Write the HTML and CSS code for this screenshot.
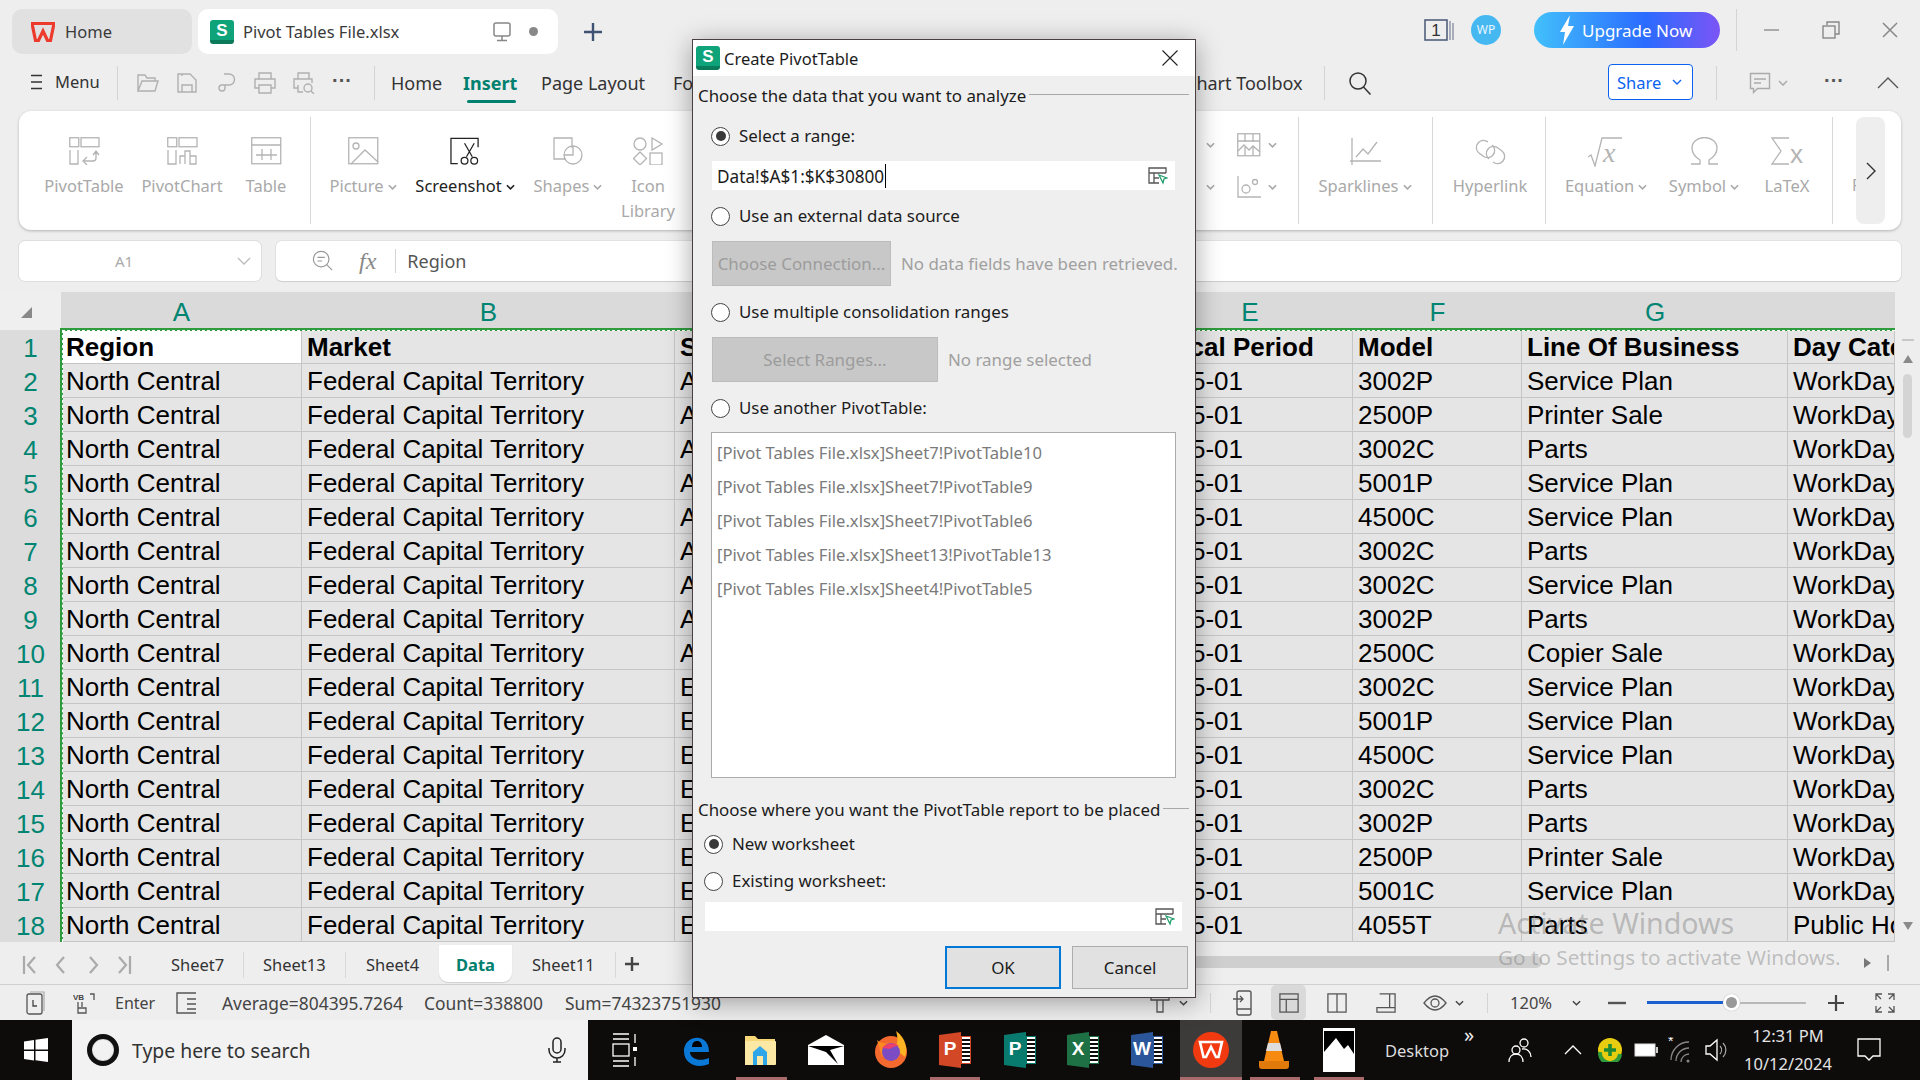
FILE: index.html
```html
<!DOCTYPE html>
<html lang="en">
<head>
<meta charset="utf-8">
<title>Pivot Tables File.xlsx</title>
<link rel="stylesheet" href="styles.css">
</head>
<body>
<div class="app">

<header class="titlebar">
  <div class="tab tab-home">
    <svg class="wps-logo" viewBox="0 0 24 20"><path d="M1 1.500h22l-3.500 17h-3L12 9l-4.500 9.500h-3z" fill="none" stroke="#ee3a2c" stroke-width="3.200" stroke-linejoin="miter"/></svg>
    <span>Home</span>
  </div>
  <div class="tab tab-doc">
    <span class="s-icon">S</span>
    <span class="doc-name">Pivot Tables File.xlsx</span>
    <svg class="monitor" viewBox="0 0 18 20"><rect x="1" y="1" width="16" height="13" rx="2" fill="none" stroke="#888" stroke-width="1.500"/><path d="M9 14v4M4 18.500h10" stroke="#888" stroke-width="1.500"/></svg>
    <span class="doc-dot"></span>
  </div>
  <svg class="plus" viewBox="0 0 20 20"><path d="M10 1v18M1 10h18" stroke="#3f5273" stroke-width="2.400"/></svg>
  <div class="title-right">
    <svg class="ic-pages" viewBox="0 0 31 24"><rect x="1" y="2" width="22" height="20" fill="none" stroke="#51607c" stroke-width="1.600"/><path d="M26 3v19M29 5v17" stroke="#8a93a5" stroke-width="1.400"/><text x="12" y="18" class="ic-pages-n">1</text></svg>
    <span class="wp-badge">WP</span>
    <button class="upgrade"><svg class="bolt" viewBox="0 0 16 30"><path d="M11 0 1 17h5l-2 13 11-19H9z" fill="#fff"/></svg><span>Upgrade Now</span></button>
    <span class="vsep tall"></span>
    <svg class="win-btn" viewBox="0 0 18 18"><path d="M1 9h15" stroke="#999" stroke-width="1.600"/></svg>
    <svg class="win-btn" viewBox="0 0 18 18"><path d="M5 4V1h12v12h-4" fill="none" stroke="#888" stroke-width="1.400"/><rect x="1" y="5" width="12" height="12" fill="none" stroke="#888" stroke-width="1.400"/></svg>
    <svg class="win-btn" viewBox="0 0 18 18"><path d="M2 2l14 14M16 2 2 16" stroke="#888" stroke-width="1.500"/></svg>
  </div>
</header>

<nav class="menubar">
  <svg class="burger" viewBox="0 0 13 16"><path d="M1 1.500h11M1 8h11M1 14.500h11" stroke="#333" stroke-width="1.400"/></svg>
  <span class="menu-label">Menu</span>
  <span class="vsep"></span>
  <div class="quick">
    <svg viewBox="0 0 22 22"><path d="M1 19V3h7l2 3h8v3M1 19l4-10h16l-3 10z" fill="none"/></svg>
    <svg viewBox="0 0 22 22"><path d="M2 2h12l6 6v12H2zM6 20v-7h10v7M6 2v2" fill="none"/></svg>
    <svg viewBox="0 0 22 22"><path d="M9 2h5a5 5 0 0 1 0 11H10v3a3 3 0 0 1-6 0 3 3 0 0 1 3-3h3" fill="none"/></svg>
    <svg viewBox="0 0 22 22"><path d="M5 7V1h12v6M5 16H1V7h20v9h-4M5 13h12v8H5z" fill="none"/></svg>
    <svg viewBox="0 0 22 22"><path d="M5 7V1h11v6M5 16H1V7h18v4M5 13v7h5" fill="none"/><circle cx="15" cy="16" r="4" fill="none"/><path d="m18 19 3 3" fill="none"/></svg>
    <span class="dots">···</span>
  </div>
  <span class="vsep"></span>
  <div class="menu-tabs">
    <span class="m-home">Home</span>
    <span class="m-insert">Insert</span>
    <span class="m-layout">Page Layout</span>
    <span class="m-formulas">Formulas</span>
    <span class="m-chart">Chart Toolbox</span>
  </div>
  <span class="vsep sep-search"></span>
  <svg class="search" viewBox="0 0 24 24"><circle cx="10" cy="10" r="8" fill="none" stroke="#333" stroke-width="1.500"/><path d="m15.500 16 7 7.500" stroke="#333" stroke-width="1.500"/></svg>
  <button class="share"><span>Share</span><svg class="caret-s" viewBox="0 0 10 6"><path d="m1 1 4 4 4-4" fill="none" stroke="#0a62f0" stroke-width="1.300"/></svg></button>
  <span class="vsep sep-share"></span>
  <svg class="comment" viewBox="0 0 22 22"><path d="M1.500 1.500h19v15h-12l-4 4v-4h-3z" fill="none" stroke="#aaa" stroke-width="1.400"/><path d="M5 7h12M5 11h7" stroke="#aaa" stroke-width="1.300"/></svg>
  <svg class="caret-g" viewBox="0 0 10 6"><path d="m1 1 4 4 4-4" fill="none" stroke="#aaa" stroke-width="1.500"/></svg>
  <span class="dots dots-r">···</span>
  <svg class="collapse" viewBox="0 0 22 12"><path d="m1 11 10-10 10 10" fill="none" stroke="#555" stroke-width="1.400"/></svg>
</nav>

<section class="ribbon">
  <div class="rb i-pt"><svg viewBox="0 0 31 28"><rect x=".75" y=".75" width="9" height="9"/><rect x="12" y=".75" width="18" height="9"/><path d="M1 13v14h8V13M27 15v6a3 3 0 0 1-3 3h-9m3-4-4 4 4 4M24 18l3-4 3 4"/></svg><span>PivotTable</span></div>
  <div class="rb i-pc"><svg viewBox="0 0 31 28"><rect x=".75" y=".75" width="9" height="9"/><rect x="12" y=".75" width="18" height="9"/><path d="M1 13v14h8V13M13 27V19h5v8M18 27V14h5v13M23 27V19h6v8z"/></svg><span>PivotChart</span></div>
  <div class="rb i-tb"><svg viewBox="0 0 31 28"><rect x=".75" y=".75" width="29" height="26"/><path d="M1 8h29M5 18h21M11 12v11M20 12v11"/></svg><span>Table</span></div>
  <span class="rsep s1"></span>
  <div class="rb i-pic"><svg viewBox="0 0 31 28"><rect x=".75" y=".75" width="29" height="26"/><circle cx="8" cy="9" r="3"/><path d="m3 27 14-14 13 12"/></svg><span>Picture<svg class="cv" viewBox="0 0 10 6"><path d="M1 1l4 4 4-4"/></svg></span></div>
  <div class="rb i-shot dark"><svg viewBox="0 0 32 28"><path d="M8 27H1V1h28v9"/><path d="M15 6l8 14M25 6l-8 14"/><circle cx="15" cy="24" r="3.500"/><circle cx="25" cy="24" r="3.500"/></svg><span>Screenshot<svg class="cv" viewBox="0 0 10 6"><path d="M1 1l4 4 4-4"/></svg></span></div>
  <div class="rb i-sh"><svg viewBox="0 0 31 28"><path d="M13 22H1V1h18v10"/><circle cx="20" cy="18" r="9"/><path d="M20 9v9h-9"/></svg><span>Shapes<svg class="cv" viewBox="0 0 10 6"><path d="M1 1l4 4 4-4"/></svg></span></div>
  <div class="rb i-il"><svg viewBox="0 0 31 28"><circle cx="7" cy="7" r="6"/><path d="M19 1v12l10-6zM7 15l6.500 6.500L7 28 .5 21.500z"/><rect x="17" y="16" width="12" height="12"/></svg><span>Icon<br>Library</span></div>
  <div class="rb-small">
    <svg class="cv" viewBox="0 0 10 6"><path d="M1 1l4 4 4-4"/></svg>
    <svg class="sm" viewBox="0 0 24 24"><rect x=".75" y=".75" width="22" height="22"/><path d="M1 8h22M8 1v8M16 1v8M1 18l6-6 5 5 4-4 7 6M8 14v9M16 14v9"/></svg>
    <svg class="cv" viewBox="0 0 10 6"><path d="M1 1l4 4 4-4"/></svg>
    <svg class="cv" viewBox="0 0 10 6"><path d="M1 1l4 4 4-4"/></svg>
    <svg class="sm" viewBox="0 0 24 24"><path d="M1 1v21h23"/><circle cx="9" cy="14" r="4"/><circle cx="18" cy="7" r="2.500"/></svg>
    <svg class="cv" viewBox="0 0 10 6"><path d="M1 1l4 4 4-4"/></svg>
  </div>
  <span class="rsep"></span>
  <div class="rb i-sp"><svg viewBox="0 0 31 28"><path d="M2 1v27M0 24h31M6 20l7-8 5 5 9-12"/></svg><span>Sparklines<svg class="cv" viewBox="0 0 10 6"><path d="M1 1l4 4 4-4"/></svg></span></div>
  <span class="rsep s3"></span>
  <div class="rb i-hl"><svg viewBox="0 0 31 30"><path d="M13 5a7 7 0 0 0-10 1 7 7 0 0 0 1 10l4 3a7 7 0 0 0 10-1 7 7 0 0 0-1-10"/><path d="M18 25a7 7 0 0 0 10-1 7 7 0 0 0-1-10l-4-3a7 7 0 0 0-10 1 7 7 0 0 0 1 10"/></svg><span>Hyperlink</span></div>
  <span class="rsep s4"></span>
  <div class="rb i-eq"><svg viewBox="0 0 36 30"><path d="M0 20l3-2 4 11L14 1h20"/><text x="15" y="25" class="eq-x">x</text></svg><span>Equation<svg class="cv" viewBox="0 0 10 6"><path d="M1 1l4 4 4-4"/></svg></span></div>
  <div class="rb i-sy"><svg viewBox="0 0 31 28"><path d="M2 27h9v-4C6 20 3 16 3 11a12.500 10.500 0 0 1 25 0c0 5-3 9-8 12v4h9"/></svg><span>Symbol<svg class="cv" viewBox="0 0 10 6"><path d="M1 1l4 4 4-4"/></svg></span></div>
  <div class="rb i-lx"><svg viewBox="0 0 34 28"><path d="M19 1H2l9 13L2 27h17"/><text x="20" y="26" class="lx-x">x</text></svg><span>LaTeX</span></div>
  <span class="rsep s5"></span>
  <span class="rb-clip">F</span>
  <div class="rb-more"><svg viewBox="0 0 10 18"><path d="m1 1 8 8-8 8" fill="none" stroke="#333" stroke-width="1.400"/></svg></div>
</section>

<section class="formula">
  <div class="namebox"><span>A1</span><svg viewBox="0 0 14 8"><path d="m1 1 6 6 6-6" fill="none" stroke="#bbb" stroke-width="1.300"/></svg></div>
  <div class="fbar">
    <svg class="f-lens" viewBox="0 0 24 24"><circle cx="10" cy="10" r="8.500" fill="none" stroke="#999" stroke-width="1.300"/><path d="M6 8h8M6 12h5M16 16l6 6" stroke="#999" stroke-width="1.300"/></svg>
    <span class="fx">fx</span>
    <span class="vsep f-sep"></span>
    <span class="f-text">Region</span>
  </div>
</section>

<section class="sheet">
  <div class="grid">
    <div class="corner"><svg viewBox="0 0 12 12"><path d="M12 1v11H1z" fill="#888"/></svg></div>
    <div class="ch">A</div><div class="ch">B</div><div class="ch"></div><div class="ch">E</div><div class="ch">F</div><div class="ch">G</div><div class="ch"></div>

    <div class="rh">1</div><div class="c b sel">Region</div><div class="c b">Market</div><div class="c b">S</div><div class="c b">Fiscal Period</div><div class="c b">Model</div><div class="c b">Line Of Business</div><div class="c b">Day Category</div>
    <div class="rh">2</div><div class="c">North Central</div><div class="c">Federal Capital Territory</div><div class="c">A</div><div class="c date">5-01</div><div class="c">3002P</div><div class="c">Service Plan</div><div class="c">WorkDay</div>
    <div class="rh">3</div><div class="c">North Central</div><div class="c">Federal Capital Territory</div><div class="c">A</div><div class="c date">5-01</div><div class="c">2500P</div><div class="c">Printer Sale</div><div class="c">WorkDay</div>
    <div class="rh">4</div><div class="c">North Central</div><div class="c">Federal Capital Territory</div><div class="c">A</div><div class="c date">5-01</div><div class="c">3002C</div><div class="c">Parts</div><div class="c">WorkDay</div>
    <div class="rh">5</div><div class="c">North Central</div><div class="c">Federal Capital Territory</div><div class="c">A</div><div class="c date">5-01</div><div class="c">5001P</div><div class="c">Service Plan</div><div class="c">WorkDay</div>
    <div class="rh">6</div><div class="c">North Central</div><div class="c">Federal Capital Territory</div><div class="c">A</div><div class="c date">5-01</div><div class="c">4500C</div><div class="c">Service Plan</div><div class="c">WorkDay</div>
    <div class="rh">7</div><div class="c">North Central</div><div class="c">Federal Capital Territory</div><div class="c">A</div><div class="c date">5-01</div><div class="c">3002C</div><div class="c">Parts</div><div class="c">WorkDay</div>
    <div class="rh">8</div><div class="c">North Central</div><div class="c">Federal Capital Territory</div><div class="c">A</div><div class="c date">5-01</div><div class="c">3002C</div><div class="c">Service Plan</div><div class="c">WorkDay</div>
    <div class="rh">9</div><div class="c">North Central</div><div class="c">Federal Capital Territory</div><div class="c">A</div><div class="c date">5-01</div><div class="c">3002P</div><div class="c">Parts</div><div class="c">WorkDay</div>
    <div class="rh">10</div><div class="c">North Central</div><div class="c">Federal Capital Territory</div><div class="c">A</div><div class="c date">5-01</div><div class="c">2500C</div><div class="c">Copier Sale</div><div class="c">WorkDay</div>
    <div class="rh">11</div><div class="c">North Central</div><div class="c">Federal Capital Territory</div><div class="c">E</div><div class="c date">5-01</div><div class="c">3002C</div><div class="c">Service Plan</div><div class="c">WorkDay</div>
    <div class="rh">12</div><div class="c">North Central</div><div class="c">Federal Capital Territory</div><div class="c">E</div><div class="c date">5-01</div><div class="c">5001P</div><div class="c">Service Plan</div><div class="c">WorkDay</div>
    <div class="rh">13</div><div class="c">North Central</div><div class="c">Federal Capital Territory</div><div class="c">E</div><div class="c date">5-01</div><div class="c">4500C</div><div class="c">Service Plan</div><div class="c">WorkDay</div>
    <div class="rh">14</div><div class="c">North Central</div><div class="c">Federal Capital Territory</div><div class="c">E</div><div class="c date">5-01</div><div class="c">3002C</div><div class="c">Parts</div><div class="c">WorkDay</div>
    <div class="rh">15</div><div class="c">North Central</div><div class="c">Federal Capital Territory</div><div class="c">E</div><div class="c date">5-01</div><div class="c">3002P</div><div class="c">Parts</div><div class="c">WorkDay</div>
    <div class="rh">16</div><div class="c">North Central</div><div class="c">Federal Capital Territory</div><div class="c">E</div><div class="c date">5-01</div><div class="c">2500P</div><div class="c">Printer Sale</div><div class="c">WorkDay</div>
    <div class="rh">17</div><div class="c">North Central</div><div class="c">Federal Capital Territory</div><div class="c">E</div><div class="c date">5-01</div><div class="c">5001C</div><div class="c">Service Plan</div><div class="c">WorkDay</div>
    <div class="rh">18</div><div class="c">North Central</div><div class="c">Federal Capital Territory</div><div class="c">E</div><div class="c date">5-01</div><div class="c">4055T</div><div class="c">Parts</div><div class="c">Public Holiday</div>
    <div class="marquee"></div>
  </div>
  <aside class="vscroll">
    <svg class="tick" viewBox="0 0 12 2"><path d="M0 1h12" stroke="#c8c8c8" stroke-width="2"/></svg>
    <svg class="arr" viewBox="0 0 10 8"><path d="M5 0l5 8H0z" fill="#8a8a8a"/></svg>
    <span class="vthumb"></span>
    <svg class="arr arr-down" viewBox="0 0 10 8"><path d="M5 8 0 0h10z" fill="#8a8a8a"/></svg>
  </aside>
</section>

<section class="tabsrow">
  <div class="nav-arrows">
    <svg viewBox="0 0 14 20"><path d="M2 1v18M13 2 6 10l7 8" fill="none" stroke="#aaa" stroke-width="2.200"/></svg>
    <svg viewBox="0 0 14 20"><path d="M10 2 3 10l7 8" fill="none" stroke="#aaa" stroke-width="2.200"/></svg>
    <svg viewBox="0 0 14 20"><path d="m4 2 7 8-7 8" fill="none" stroke="#aaa" stroke-width="2.200"/></svg>
    <svg viewBox="0 0 14 20"><path d="M12 1v18M1 2l7 8-7 8" fill="none" stroke="#aaa" stroke-width="2.200"/></svg>
  </div>
  <span class="st st1">Sheet7</span><span class="st-sep"></span>
  <span class="st st2">Sheet13</span><span class="st-sep"></span>
  <span class="st st3">Sheet4</span>
  <span class="st st-active">Data</span>
  <span class="st st5">Sheet11</span><span class="st-sep"></span>
  <svg class="st-plus" viewBox="0 0 16 16"><path d="M8 1v14M1 8h14" stroke="#444" stroke-width="2.400"/></svg>
  <span class="hthumb"></span>
  <svg class="h-arrow" viewBox="0 0 7 10"><path d="M0 0l7 5-7 5z" fill="#777"/></svg>
  <span class="h-bar"></span>
</section>

<footer class="status">
  <svg class="s-ic" viewBox="0 0 20 24"><rect x="1" y="3" width="15" height="20" rx="2" fill="none" stroke="#555" stroke-width="1.300"/><path d="M4 1h14v19" fill="none" stroke="#aaa" stroke-width="1.200"/><path d="M7 9v6h4" fill="none" stroke="#444" stroke-width="1.300"/></svg>
  <span class="vb"><svg viewBox="0 0 22 24"><path d="M5 11v11h8v-5H5M9 11v5M17 3h4v6" fill="none" stroke="#555" stroke-width="1.300"/><text x="0" y="9" class="vb-t">VB</text></svg></span>
  <span class="s-enter">Enter</span>
  <svg class="s-ic s-list" viewBox="0 0 22 24"><path d="M20 2H1v20h19M11 8h9M11 13h9M11 18h9" fill="none" stroke="#555" stroke-width="1.400"/></svg>
  <span class="s-avg">Average=804395.7264</span>
  <span class="s-cnt">Count=338800</span>
  <span class="s-sum">Sum=74323751930</span>
  <svg class="s-view" viewBox="0 0 24 24"><path d="M3 3v6h18V3M3 3h5M16 3h5M9 9v12h6V9" fill="none" stroke="#555" stroke-width="1.300"/></svg>
  <svg class="s-car" viewBox="0 0 10 6"><path d="m1 1 4 4 4-4" fill="none" stroke="#444" stroke-width="1.600"/></svg>
  <span class="vsep s-sep0"></span>
  <svg class="s-pr" viewBox="0 0 20 26"><rect x="4" y="1" width="14" height="24" rx="2" fill="none" stroke="#555" stroke-width="1.400"/><path d="M4 19h14M0 9h10m-3-3 3 3-3 3" fill="none" stroke="#555" stroke-width="1.300"/></svg>
  <span class="s-hi"><svg viewBox="0 0 22 22"><rect x="1" y="1" width="20" height="20" fill="none" stroke="#555" stroke-width="1.400"/><path d="M1 7h20M8 7v14" stroke="#555" stroke-width="1.400"/></svg></span>
  <svg class="s-v2" viewBox="0 0 22 22"><rect x="1" y="1" width="20" height="20" fill="none" stroke="#555" stroke-width="1.400"/><path d="M11 1v20" stroke="#555" stroke-width="1.400"/></svg>
  <svg class="s-v3" viewBox="0 0 22 22"><path d="M4 1h17v20H1v-5h20M15 1v15" fill="none" stroke="#555" stroke-width="1.400"/></svg>
  <svg class="s-eye" viewBox="0 0 24 20"><path d="M1 10Q12-4 23 10 12 24 1 10z" fill="none" stroke="#555" stroke-width="1.300"/><circle cx="12" cy="10" r="4" fill="none" stroke="#555" stroke-width="1.300"/></svg>
  <svg class="s-car s-car1" viewBox="0 0 10 6"><path d="m1 1 4 4 4-4" fill="none" stroke="#444" stroke-width="1.600"/></svg>
  <span class="vsep s-sep"></span>
  <span class="s-zoom">120%</span>
  <svg class="s-car s-car2" viewBox="0 0 10 6"><path d="m1 1 4 4 4-4" fill="none" stroke="#444" stroke-width="1.600"/></svg>
  <svg class="s-minus" viewBox="0 0 18 4"><path d="M0 2h18" stroke="#555" stroke-width="2.400"/></svg>
  <div class="slider"><span class="slider-fill"></span><span class="slider-thumb"></span></div>
  <svg class="s-plus" viewBox="0 0 16 16"><path d="M8 0v16M0 8h16" stroke="#444" stroke-width="2.200"/></svg>
  <svg class="s-full" viewBox="0 0 20 20"><path d="M1 7V1h6M13 1h6v6M19 13v6h-6M7 19H1v-6M1 1l5 5M19 1l-5 5M19 19l-5-5M1 19l5-5" fill="none" stroke="#555" stroke-width="1.300"/></svg>
</footer>

<footer class="taskbar">
  <svg class="t-win" viewBox="0 0 24 24"><path d="M0 3.500 10 2v9.500H0zM11.500 1.800 24 0v11.500H11.500zM0 13h10v9.500L0 21zM11.500 13H24v11l-12.500-1.800z" fill="#fff"/></svg>
  <div class="t-search">
    <span class="cortana"></span>
    <span class="t-ph">Type here to search</span>
    <svg class="t-mic" viewBox="0 0 18 26"><rect x="5" y="1" width="8" height="15" rx="4" fill="none" stroke="#222" stroke-width="1.500"/><path d="M1 11v2a8 8 0 0 0 16 0v-2M9 21v4M5 25h8" fill="none" stroke="#222" stroke-width="1.500"/></svg>
  </div>
  <svg class="t-view" viewBox="0 0 26 34"><path d="M2 1h16M2 6h16M2 28h16M2 33h16" stroke="#fff" stroke-width="1.300"/><rect x="2" y="11" width="16" height="12" fill="none" stroke="#fff" stroke-width="1.300"/><path d="M24 1v9M24 24v9" stroke="#fff" stroke-width="1.300"/><rect x="22" y="14" width="4" height="4" fill="#fff"/></svg>
  <svg class="t-app a-edge" viewBox="0 0 32 36"><path d="M3 17C5 8 12 5 18 6c7 1 10 7 10 14H9c0 7 10 10 19 6v6c-12 5-25 0-25-13z" fill="#0a78d7"/><path d="M11 15h10c0-4-2-6-5-6s-5 2-5 6z" fill="#000"/></svg>
  <svg class="t-app a-folder" viewBox="0 0 32 36"><path d="M1 4h10l3 3h17v26H1z" fill="#f6d878"/><rect x="1" y="9" width="31" height="24" rx="1" fill="#fbe8a4"/><path d="M9 33V20l7-6 7 6v13h-4v-9h-6v9z" fill="#2ea6e8"/></svg>
  <svg class="t-app a-mail" viewBox="0 0 36 30"><path d="M0 10 18 0l18 10v20H0z" fill="#fff"/><path d="M0 11 36 11 22 15l8 14L18 17 3 12z" fill="#000"/></svg>
  <svg class="t-app a-fox" viewBox="0 0 34 38"><circle cx="17" cy="21" r="16" fill="#f46a2e"/><path d="M22 0c10 7 12 18 9 26l-10-8c3-6 3-12 1-18z" fill="#fcb324"/><path d="M3 9c3 3 8 4 13 3l-8 14z" fill="#fc8a20"/><circle cx="17" cy="21" r="9" fill="#7b4cc4"/><path d="M8 17c4-5 12-6 17-2-4 0-7 1-9 3z" fill="#ed3e6c"/></svg>
  <div class="office o-ppt"><span class="o-l">P</span><span class="o-d"></span></div>
  <div class="office o-pub"><span class="o-l">P</span><span class="o-d"></span></div>
  <div class="office o-xls"><span class="o-l">X</span><span class="o-d"></span></div>
  <div class="office o-doc"><span class="o-l">W</span><span class="o-d"></span></div>
  <div class="t-wps"><svg viewBox="0 0 36 36"><circle cx="18" cy="18" r="18" fill="#f23a10"/><path d="M7 10h22l-3.500 15h-2.500L18 15l-5 10h-2.500z" fill="none" stroke="#fff" stroke-width="2.600"/></svg></div>
  <svg class="t-app a-vlc" viewBox="0 0 30 38"><path d="M12 0h6l7 30H5z" fill="#f78a10"/><path d="M9 12h12l2 8H7z" fill="#ddd"/><path d="M0 30h30v5a3 3 0 0 1-3 3H3a3 3 0 0 1-3-3z" fill="#e07a0a"/></svg>
  <svg class="t-app a-photo" viewBox="0 0 32 44"><rect width="32" height="44" fill="#fff"/><rect x="1" y="3" width="30" height="38" fill="#000"/><path d="M1 41V24l12-14 8 11 4-4 6 9v15z" fill="#fff"/></svg>
  <span class="t-desk">Desktop</span>
  <span class="t-chev">»</span>
  <svg class="t-people" viewBox="0 0 24 26"><circle cx="8" cy="13" r="4" fill="none" stroke="#fff" stroke-width="1.300"/><circle cx="16" cy="6" r="4" fill="none" stroke="#fff" stroke-width="1.300"/><path d="M1 25c0-5 3-8 7-8s7 3 7 8M14 12c5-1 9 3 9 8" fill="none" stroke="#fff" stroke-width="1.300"/></svg>
  <svg class="t-up" viewBox="0 0 18 10"><path d="m1 9 8-8 8 8" fill="none" stroke="#fff" stroke-width="1.300"/></svg>
  <svg class="t-green" viewBox="0 0 24 24"><circle cx="12" cy="12" r="12" fill="#e8cc10"/><path d="M2 14a10 10 0 0 0 20 2" fill="none" stroke="#2e9a3a" stroke-width="4"/><path d="M12 6v12M6 12h12" stroke="#1f8a33" stroke-width="3.600"/></svg>
  <svg class="t-batt" viewBox="0 0 24 14"><rect x="1" y="1" width="20" height="12" fill="#fff" stroke="#ddd"/><rect x="22" y="4" width="2" height="6" fill="#ccc"/></svg>
  <svg class="t-wifi" viewBox="0 0 24 26"><text x="0" y="9" class="wifi-s">*</text><path d="M3 23a18 18 0 0 1 18-18M8 24a13 13 0 0 1 13-13M13 25a8 8 0 0 1 8-8" fill="none" stroke="#888" stroke-width="1.300"/><circle cx="20" cy="24" r="1.500" fill="#888"/></svg>
  <svg class="t-vol" viewBox="0 0 24 24"><path d="M1 8h4l7-6v20l-7-6H1z" fill="none" stroke="#fff" stroke-width="1.300"/><path d="M15 8a6 6 0 0 1 0 8M18 5a10 10 0 0 1 0 14" fill="none" stroke="#aaa" stroke-width="1.200"/></svg>
  <div class="t-clock"><span>12:31 PM</span><span>10/12/2024</span></div>
  <svg class="t-note" viewBox="0 0 24 24"><path d="M1 1h22v17h-7l-4 4-4-4H1z" fill="none" stroke="#fff" stroke-width="1.300"/></svg>
  <span class="run r1"></span><span class="run r2"></span><span class="run r3"></span><span class="run r4"></span><span class="run r5"></span>
</footer>

<div class="watermark">
  <div class="wm1">Activate Windows</div>
  <div class="wm2">Go to Settings to activate Windows.</div>
</div>

<div class="dialog">
  <div class="d-title">
    <span class="s-icon s-small">S</span>
    <span class="d-name">Create PivotTable</span>
    <svg class="d-close" viewBox="0 0 16 16"><path d="m.5.500 15 15M15.500.500l-15 15" stroke="#222" stroke-width="1.100"/></svg>
  </div>
  <div class="d-head h1"><span>Choose the data that you want to analyze</span><i></i></div>
  <label class="radio r-a on"><b></b>Select a range:</label>
  <div class="d-input i1"><span>Data!$A$1:$K$30800</span><em class="caret"></em>
    <svg class="pick" viewBox="0 0 20 18"><path d="M18 6V1H1v15h10M1 6h17M6 6v10M6 11h5" fill="none" stroke="#555" stroke-width="1.300"/><path d="m11 8 8 3-3 1-1 4z" fill="none" stroke="#1f9d6a" stroke-width="1.300"/></svg>
  </div>
  <label class="radio r-b"><b></b>Use an external data source</label>
  <div class="d-row r1"><span class="d-btn w1">Choose Connection...</span><span class="d-note">No data fields have been retrieved.</span></div>
  <label class="radio r-b"><b></b>Use multiple consolidation ranges</label>
  <div class="d-row r1"><span class="d-btn w2">Select Ranges...</span><span class="d-note">No range selected</span></div>
  <label class="radio r-b"><b></b>Use another PivotTable:</label>
  <ul class="d-list">
    <li>[Pivot Tables File.xlsx]Sheet7!PivotTable10</li>
    <li>[Pivot Tables File.xlsx]Sheet7!PivotTable9</li>
    <li>[Pivot Tables File.xlsx]Sheet7!PivotTable6</li>
    <li>[Pivot Tables File.xlsx]Sheet13!PivotTable13</li>
    <li>[Pivot Tables File.xlsx]Sheet4!PivotTable5</li>
  </ul>
  <div class="d-head h2"><span>Choose where you want the PivotTable report to be placed</span><i></i></div>
  <label class="radio r-c on"><b></b>New worksheet</label>
  <label class="radio r-d"><b></b>Existing worksheet:</label>
  <div class="d-input i2">
    <svg class="pick" viewBox="0 0 20 18"><path d="M18 6V1H1v15h10M1 6h17M6 6v10M6 11h5" fill="none" stroke="#555" stroke-width="1.300"/><path d="m11 8 8 3-3 1-1 4z" fill="none" stroke="#1f9d6a" stroke-width="1.300"/></svg>
  </div>
  <div class="d-actions"><button class="ok">OK</button><button class="cancel">Cancel</button></div>
</div>

</div>
</body>
</html>
```
FILE: styles.css
```css
* { box-sizing: border-box; }
html, body { margin: 0; padding: 0; }
body { width: 1920px; height: 1080px; overflow: hidden; background: #eeeeee; font-family: "Noto Sans", "Open Sans", sans-serif; color: #333; }
svg { display: block; flex: none; }
.app { position: relative; width: 1920px; height: 1080px; display: flex; flex-direction: column; overflow: hidden; }

/* title bar */
.titlebar { height: 60px; flex: none; display: flex; align-items: flex-start; padding: 9px 0 0 12px; }
.tab { height: 45px; border-radius: 10px; display: flex; align-items: center; font-size: 16.500px; color: #3a3a3a; }
.tab-home { width: 180px; background: #e1e1e1; padding-left: 19px; }
.wps-logo { width: 24px; height: 20px; margin-right: 10px; }
.tab-doc { width: 360px; margin-left: 6px; background: #fff; padding-left: 12px; }
.s-icon { width: 24px; height: 24px; flex: none; border-radius: 3px; background: linear-gradient(#0fa37a 0 82%, #0a7a5a 82%); color: #fff; font-family: "Liberation Sans", sans-serif; font-weight: 700; font-size: 17px; line-height: 22px; text-align: center; }
.doc-name { margin-left: 9px; width: 250px; }
.monitor { width: 18px; height: 20px; }
.doc-dot { width: 9px; height: 9px; border-radius: 50%; background: #888; margin-left: 18px; }
.plus { width: 20px; height: 20px; margin: 13px 0 0 25px; }
.title-right { margin-left: auto; display: flex; align-items: center; height: 36px; margin-top: 3px; padding-right: 21px; }
.ic-pages { width: 31px; height: 24px; margin-right: -1px; }
.ic-pages-n { font: 17px "Liberation Sans", sans-serif; fill: #333; text-anchor: middle; }
.wp-badge { width: 30px; height: 30px; border-radius: 50%; background: #45b8f2; color: #eaf6fd; font-size: 12px; line-height: 30px; text-align: center; margin-left: 17px; }
.upgrade { width: 186px; height: 36px; margin-left: 33px; border: 0; border-radius: 18px; padding: 0 0 0 25px; display: flex; align-items: center; color: #fff; font: 17px "Noto Sans", sans-serif; background: linear-gradient(90deg, #42c0fb 0%, #2a6bff 60%, #7b55f5 100%); }
.bolt { width: 16px; height: 30px; margin-right: 7px; }
.vsep { width: 1px; height: 34px; background: #d4d4d4; flex: none; }
.vsep.tall { height: 42px; margin-left: 16px; }
.win-btn { width: 18px; height: 18px; margin-left: 41px; }
.vsep.tall + .win-btn { margin-left: 26px; }

/* menu row */
.menubar { height: 46px; flex: none; display: flex; align-items: center; padding-left: 30px; }
.burger { width: 13px; height: 16px; margin-top: -2px; }
.menu-label { margin-left: 12px; width: 62px; font-size: 16.500px; color: #333; margin-top: -4px; }
.quick { display: flex; align-items: center; gap: 17px; margin-left: 19px; width: 237px; }
.quick svg { width: 22px; height: 22px; stroke: #b0b0b0; stroke-width: 1.400; }
.dots { font: 700 20px "Liberation Sans", sans-serif; letter-spacing: 0; color: #555; margin-top: -6px; }
.menu-tabs { display: flex; font-size: 18px; color: #333; margin-left: 16px; position: relative; height: 46px; align-items: center; width: 933px; }
.menu-tabs span { white-space: nowrap; }
.m-home { width: 72px; }
.m-insert { width: 78px; color: #00806e; font-weight: 700; position: relative; align-self: stretch; display: flex; align-items: center; }
.m-insert::after { content: ""; position: absolute; left: 4px; top: 40px; width: 49px; height: 3px; border-radius: 2px; background: #00806e; }
.m-layout { width: 132px; }
.m-formulas { width: 512px; }
.search { width: 24px; height: 24px; margin-left: 23px; }
.share { width: 85px; height: 36px; margin-left: 236px; margin-top: -2px; display: flex; align-items: center; padding: 0 0 0 8px; gap: 11px; border: 1px solid #0a62f0; border-radius: 4px; background: #fff; color: #0a62f0; font: 16.500px "Noto Sans", sans-serif; }
.caret-s { width: 10px; height: 6px; }
.sep-share { margin-left: 23px; }
.comment { width: 22px; height: 22px; margin-left: 32px; }
.caret-g { width: 10px; height: 6px; margin-left: 7px; }
.dots-r { margin-left: 36px; }
.collapse { width: 22px; height: 12px; margin-left: 33px; }

/* ribbon */
.ribbon { flex: none; height: 119px; margin: 5px 19px 0; background: #fff; border-radius: 12px; box-shadow: 0 1px 3px rgba(0,0,0,.25); display: flex; padding: 6px 0 6px 21px; position: relative; }
.rb { flex: none; display: flex; flex-direction: column; align-items: center; padding-top: 20px; font-size: 16.500px; line-height: 25px; color: #a9a9a9; white-space: nowrap; text-align: center; }
.rb > svg { width: 31px; height: 28px; fill: none; stroke: #b4b4b4; stroke-width: 1.300; margin-bottom: 8px; }
.rb.dark { color: #222; }
.rb.dark > svg { stroke: #222; }
.rb span { display: block; }
.cv { display: inline-block; width: 9px; height: 6px; margin-left: 4px; vertical-align: 2px; fill: none; stroke: #a9a9a9; stroke-width: 1.800; }
.dark .cv { stroke: #222; }
.i-pt { width: 88px; } .i-pc { width: 92px; margin-left: 8px; } .i-tb { width: 52px; margin-left: 12px; }
.rsep { flex: none; width: 1px; background: #d8d8d8; }
.s1 { margin-left: 18px; }
.i-pic { width: 80px; margin-left: 12px; } .i-shot { width: 120px; margin-left: 2px; } .i-sh { width: 76px; margin-left: 5px; } .i-il { width: 56px; margin-left: 14px; }
.rb-small { flex: none; width: 93px; margin-left: 529px; padding-top: 16px; display: grid; grid-template-columns: 10px 46px 16px; grid-auto-rows: 24px; row-gap: 18px; align-items: center; align-self: flex-start; }
.rb-small .cv { margin: 0; justify-self: end; }
.rb-small .sm { width: 24px; height: 24px; fill: none; stroke: #b4b4b4; stroke-width: 1.300; justify-self: end; }
.i-sp { width: 120px; margin-left: 6px; } .s3 { margin-left: 7px; }
.i-hl { width: 80px; margin-left: 17px; } .s4 { margin-left: 15px; }
.i-eq { width: 100px; margin-left: 10px; } .i-sy { width: 86px; margin-left: 5px; } .i-lx { width: 60px; margin-left: 10px; }
.i-eq > svg { width: 36px; height: 30px; margin-bottom: 6px; }
.i-hl > svg { width: 31px; height: 30px; margin-bottom: 6px; }
.i-lx > svg { width: 34px; height: 28px; }
.eq-x { font: italic 28px "Liberation Serif", serif; fill: #b4b4b4; stroke: none; }
.lx-x { font: 26px "Liberation Sans", sans-serif; fill: #b4b4b4; stroke: none; }
.s5 { margin-left: 15px; }
.rb-clip { width: 4px; margin-left: 19px; overflow: hidden; color: #a9a9a9; font-size: 16px; line-height: 25px; padding-top: 56px; }
.rb-more { width: 29px; margin-left: 0; background: #eeeeee; border-radius: 8px; display: flex; align-items: center; justify-content: center; }
.rb-more svg { width: 10px; height: 18px; }

/* formula */
.formula { flex: none; display: flex; gap: 15px; margin: 11px 19px 0; height: 40px; }
.namebox { width: 242px; background: #fff; border-radius: 6px; box-shadow: 0 0 0 1px #dedede; display: flex; align-items: center; color: #aaa; font-size: 15px; position: relative; }
.namebox span { width: 210px; text-align: center; }
.namebox svg { width: 14px; height: 8px; margin-left: 8px; }
.fbar { flex: 1; background: #fff; border-radius: 6px; box-shadow: 0 1px 1px #cfcfcf, 0 0 0 1px #e2e2e2; display: flex; align-items: center; padding-left: 36px; }
.f-lens { width: 22px; height: 22px; }
.fx { margin-left: 25px; font: italic 24px "Liberation Serif", serif; color: #888; }
.f-sep { height: 24px; margin-left: 19px; }
.f-text { margin-left: 11px; font-size: 18px; color: #555; }

/* sheet */
.sheet { flex: none; height: 650px; margin-top: 11px; display: flex; font-family: "Liberation Sans", Arial, sans-serif; }
.grid { width: 1895px; position: relative; display: grid; grid-template-columns: 61px 241px 373px 472px 206px 169px 266px 107px; grid-template-rows: 38px repeat(18, 34px); }
.corner { background: #efefef; display: flex; align-items: center; justify-content: center; }
.corner svg { width: 12px; height: 12px; margin: 2px 0 0 -9px; }
.ch { background: #dadada; height: 36px; color: #008572; font-size: 26px; line-height: 40px; text-align: center; }
.rh { background: #dcdcdc; color: #008572; font-size: 26px; line-height: 36px; text-align: center; }
.c { background: #e5e5e5; border-right: 1.500px solid #c6c6c6; border-bottom: 1.500px solid #c6c6c6; font-size: 26px; line-height: 35px; padding-left: 5px; color: #000; white-space: nowrap; overflow: hidden; }
.c.b { font-weight: 700; }
.c.sel { background: #fff; }
.c.date { text-align: right; padding: 0 109px 0 0; }
.marquee { position: absolute; left: 60px; top: 36px; right: 0; bottom: 0; border-top: 3px solid #2e9b3c; border-left: 3px solid #2e9b3c; pointer-events: none; }
.marquee::before { content: ""; position: absolute; left: -1px; top: -1px; right: 0; bottom: 0; border-top: 1px dashed #fff; border-left: 1px dashed #fff; }
.vscroll { width: 25px; display: flex; flex-direction: column; align-items: center; padding-top: 47px; position: relative; }
.tick { width: 12px; height: 2px; }
.arr { width: 10px; height: 8px; margin-top: 14px; }
.vthumb { width: 9px; height: 64px; background: #d4d4d4; border-radius: 5px; margin-top: 11px; }
.arr-down { margin-top: 484px; }

/* sheet tabs */
.tabsrow { flex: none; height: 42px; margin-top: 1px; display: flex; align-items: flex-start; border-bottom: 1px solid #cfcfcf; font-size: 16.500px; color: #333; }
.nav-arrows { display: flex; gap: 18px; margin: 12px 0 0 22px; width: 149px; }
.nav-arrows svg { width: 14px; height: 20px; }
.st { height: 37px; line-height: 40px; margin-top: 2px; white-space: nowrap; }
.st1 { width: 72px; }
.st-sep { width: 1px; height: 26px; background: #d8d8d8; margin-top: 9px; }
.st2 { width: 101px; padding-left: 19px; }
.st3 { width: 93px; padding-left: 20px; }
.st-active { width: 73px; background: #fff; border-radius: 0 0 9px 9px; text-align: center; font-weight: 700; color: #00806e; box-shadow: 0 1px 1px #d0d0d0; }
.st5 { width: 103px; padding-left: 20px; }
.st-plus { width: 16px; height: 16px; margin: 13px 0 0 8px; }
.hthumb { width: 540px; height: 12px; margin: 13px 0 0 362px; background: #cfcfcf; border-radius: 6px; }
.h-arrow { width: 7px; height: 10px; margin: 15px 0 0 322px; }
.h-bar { width: 2px; height: 16px; background: #aaa; margin: 12px 0 0 16px; }

/* status */
.status { flex: none; height: 35px; display: flex; align-items: center; padding-left: 26px; font-size: 17.400px; color: #444; white-space: nowrap; }
.s-ic { width: 20px; height: 24px; }
.vb svg { width: 22px; height: 24px; margin-left: 27px; }
.vb-t { font: 700 8px "Liberation Sans", sans-serif; fill: #444; }
.s-enter { margin-left: 20px; width: 61px; font-size: 16px; }
.s-list { width: 22px; }
.s-avg { margin-left: 24px; width: 202px; }
.s-cnt { width: 141px; }
.s-sum { width: 583px; }
.s-view { width: 24px; height: 24px; }
.s-car { width: 9px; height: 6px; margin-left: 7px; }
.s-sep0 { height: 20px; margin-left: 22px; }
.s-pr { width: 20px; height: 26px; margin-left: 22px; }
.s-hi { width: 35px; height: 35px; margin-left: 18px; background: #d9d9d9; border-radius: 5px; display: flex; align-items: center; justify-content: center; }
.s-hi svg { width: 20px; height: 20px; }
.s-v2 { width: 20px; height: 20px; margin-left: 21px; }
.s-v3 { width: 20px; height: 20px; margin-left: 29px; }
.s-eye { width: 24px; height: 20px; margin-left: 27px; }
.s-car1 { margin-left: 8px; }
.s-sep { height: 20px; margin-left: 23px; }
.s-zoom { margin-left: 22px; width: 52px; font-size: 16.500px; }
.s-car2 { margin-left: 10px; }
.s-minus { width: 18px; height: 4px; margin-left: 27px; }
.slider { width: 159px; height: 2px; margin-left: 21px; background: #b8b8b8; position: relative; }
.slider-fill { position: absolute; left: 0; top: -.5px; height: 3px; width: 84px; background: #1a5fd0; }
.slider-thumb { position: absolute; left: 76px; top: -8px; width: 17px; height: 17px; border-radius: 50%; background: #999; border: 3px solid #fff; box-shadow: 0 0 1px #999; }
.s-plus { width: 16px; height: 16px; margin-left: 22px; }
.s-full { width: 20px; height: 20px; margin-left: 31px; }

/* taskbar */
.taskbar { flex: none; height: 60px; background: #0e0b0b; display: flex; align-items: center; position: relative; color: #e6e6e6; }
.t-win { width: 24px; height: 24px; margin-left: 24px; }
.t-search { width: 516px; height: 60px; margin-left: 24px; background: #f2f2f2; display: flex; align-items: center; padding-left: 15px; color: #333; }
.cortana { width: 32px; height: 32px; border-radius: 50%; border: 5px solid #111; box-shadow: inset 0 0 1px #555; }
.t-ph { margin-left: 13px; font-size: 19.400px; width: 416px; }
.t-mic { width: 18px; height: 26px; }
.t-view { width: 26px; height: 34px; margin-left: 23px; }
.t-app { flex: none; }
.a-edge { width: 32px; height: 36px; margin-left: 44px; }
.a-folder { width: 32px; height: 36px; margin-left: 31px; }
.a-mail { width: 36px; height: 30px; margin-left: 32px; }
.a-fox { width: 34px; height: 38px; margin-left: 30px; }
.office { width: 32px; height: 36px; position: relative; flex: none; margin-left: 31px; display: flex; }
.o-pub { margin-left: 33px; }
.o-doc { margin-left: 32px; }
.o-l { width: 22px; height: 36px; color: #fff; font: 700 19px/34px "Liberation Sans", sans-serif; text-align: center; clip-path: polygon(0 8%, 100% 0, 100% 100%, 0 92%); }
.o-d { width: 10px; height: 28px; margin-top: 4px; background: repeating-linear-gradient(#fff 0 2px, transparent 2px 4px); border: 1px solid #fff; }
.o-ppt .o-l { background: #d24726; } .o-ppt .o-d { border-color: #d24726; }
.o-pub .o-l { background: #087a6e; } .o-pub .o-d { border-color: #087a6e; }
.o-xls .o-l { background: #1e7145; } .o-xls .o-d { border-color: #1e7145; }
.o-doc .o-l { background: #2b579a; } .o-doc .o-d { border-color: #2b579a; }
.t-wps { width: 62px; height: 60px; margin-left: 17px; background: #3d3a3a; display: flex; align-items: center; justify-content: center; }
.t-wps svg { width: 36px; height: 36px; }
.a-vlc { width: 30px; height: 38px; margin-left: 17px; }
.a-photo { width: 32px; height: 44px; margin-left: 34px; }
.t-desk { margin-left: 30px; font-size: 16.500px; color: #ddd; width: 75px; }
.t-chev { font-size: 20px; color: #eee; margin: -32px 0 0 4px; width: 44px; }
.t-people { width: 24px; height: 26px; }
.t-up { width: 18px; height: 10px; margin-left: 32px; }
.t-green { width: 24px; height: 24px; margin-left: 16px; }
.t-batt { width: 24px; height: 14px; margin-left: 12px; }
.t-wifi { width: 24px; height: 26px; margin-left: 10px; }
.wifi-s { font: 14px "Liberation Sans", sans-serif; fill: #fff; }
.t-vol { width: 24px; height: 24px; margin-left: 13px; }
.t-clock { width: 114px; margin-left: 2px; display: flex; flex-direction: column; align-items: center; font-size: 16.500px; line-height: 28px; color: #e4e4e4; }
.t-note { width: 24px; height: 24px; margin-left: 12px; }
.run { position: absolute; bottom: 0; height: 3px; background: #a86a6a; }
.r1 { left: 736px; width: 51px; } .r2 { left: 930px; width: 50px; } .r3 { left: 1180px; width: 62px; } .r4 { left: 1250px; width: 50px; } .r5 { left: 1314px; width: 50px; }

/* watermark */
.watermark { position: absolute; left: 1498px; top: 905px; color: rgba(120,120,120,.42); pointer-events: none; white-space: nowrap; }
.wm1 { font-size: 28.600px; line-height: 36px; }
.wm2 { font-size: 20.700px; line-height: 33px; }

/* dialog */
.dialog { position: absolute; left: 692px; top: 39px; width: 504px; height: 959px; background: #efefef; border: 1px solid #4a4040; box-shadow: 0 4px 24px rgba(0,0,0,.35); display: flex; flex-direction: column; font-size: 16.900px; color: #1c1c1c; }
.d-title { height: 36px; flex: none; background: #fff; display: flex; align-items: center; padding-left: 3px; }
.s-small { width: 24px; height: 24px; }
.d-name { margin-left: 4px; font-size: 16.500px; }
.d-close { width: 16px; height: 16px; margin-left: auto; margin-right: 17px; }
.d-head { height: 24px; flex: none; display: flex; align-items: center; padding: 0 6px 0 5px; line-height: 24px; white-space: nowrap; }
.d-head i { flex: 1; height: 1px; background: #a8a8a8; margin: -4px 0 0 3px; }
.h1 { margin-top: 8px; }
.h2 { margin-top: 20px; }
.radio { height: 24px; flex: none; display: flex; align-items: center; line-height: 24px; }
.radio b { width: 19px; height: 19px; flex: none; border-radius: 50%; border: 1px solid #444; background: #fff; margin-right: 9px; display: flex; align-items: center; justify-content: center; }
.radio.on b::after { content: ""; width: 10px; height: 10px; border-radius: 50%; background: #3a3a3a; }
.r-a { margin: 16px 0 0 18px; }
.r-b { margin: 14px 0 0 18px; }
.r-c { margin: 10px 0 0 11px; }
.r-d { margin: 13px 0 0 11px; }
.d-input { flex: none; height: 29px; background: #fff; display: flex; align-items: center; position: relative; font-size: 17.200px; }
.i1 { width: 463px; margin: 13px 0 0 19px; padding: 1px 0 0 5px; }
.i2 { width: 477px; margin: 9px 0 0 12px; }
.caret { width: 1px; height: 24px; background: #000; margin-left: 1px; }
.pick { width: 20px; height: 18px; margin-left: auto; margin-right: 7px; }
.d-row { flex: none; margin: 13px 0 0 19px; height: 45px; display: flex; align-items: center; }
.d-btn { height: 45px; background: #c8c8c8; border: 1px solid #bcbcbc; color: #9c9c9c; display: flex; align-items: center; justify-content: center; flex: none; white-space: nowrap; }
.w1 { width: 179px; } .w2 { width: 226px; }
.d-note { margin-left: 10px; color: #a0a0a0; white-space: nowrap; }
.d-list { flex: none; list-style: none; margin: 12px 0 0 18px; padding: 3px 0 0 5px; width: 465px; height: 346px; background: #fff; border: 1px solid #ababab; color: #7a7a7a; font-size: 16.600px; }
.d-list li { height: 34px; line-height: 34px; white-space: nowrap; }
.d-actions { flex: none; display: flex; justify-content: flex-end; gap: 11px; margin-top: 15px; padding-right: 7px; }
.d-actions button { width: 116px; height: 43px; font: 16.900px "Noto Sans", sans-serif; color: #1c1c1c; background: #e1e1e1; }
.ok { border: 2px solid #0078d7; }
.cancel { border: 1px solid #adadad; }
```
